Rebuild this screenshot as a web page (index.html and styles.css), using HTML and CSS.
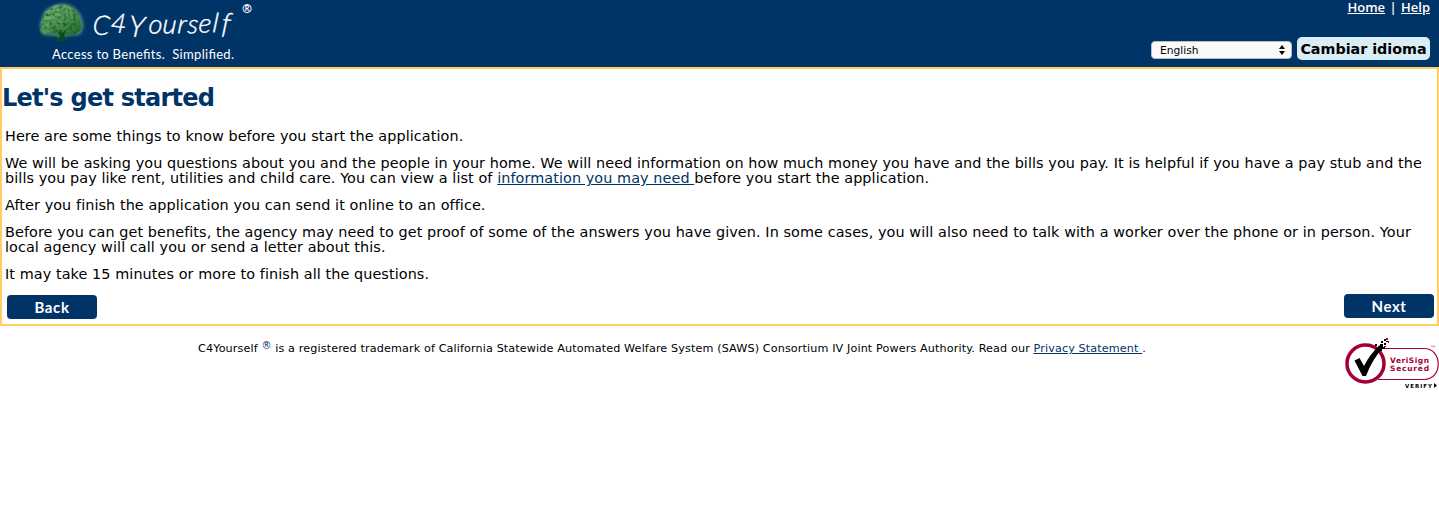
FILE: index.html
```html
<!DOCTYPE html>
<html lang="en">
<head>
<meta charset="utf-8">
<title>C4Yourself - Let's get started</title>
<link rel="stylesheet" href="styles.css">
</head>
<body>
<header class="header">
  <svg class="logo" width="240" height="67" viewBox="30 0 240 67" role="img" aria-label="C4Yourself">
    <defs>
      <filter id="glow" x="-20%" y="-20%" width="140%" height="140%"><feGaussianBlur stdDeviation="1.6"/></filter>
      <filter id="leaves" x="-5%" y="-5%" width="110%" height="110%" color-interpolation-filters="sRGB">
        <feTurbulence type="fractalNoise" baseFrequency=".3" numOctaves="2" seed="4"/>
        <feColorMatrix values="0 0 0 0 .07  0 0 0 0 .33  0 0 0 0 .1  2 0 0 0 -.8"/>
        <feComposite in2="SourceGraphic" operator="in" result="n"/>
        <feMerge><feMergeNode in="SourceGraphic"/><feMergeNode in="n"/></feMerge>
      </filter>
      <linearGradient id="crown" x1="0" y1="0" x2=".8" y2="1"><stop offset="0" stop-color="#82ba84"/><stop offset=".5" stop-color="#5a9d5e"/><stop offset="1" stop-color="#286d31"/></linearGradient>
    </defs>
    <path class="halo" filter="url(#glow)" d="M42 17Q44 10 50 7Q60 1 70 5Q79 9 82 18Q86 30 79 35L66 36L62 40L57 36L44 35Q37 30 42 17Z"/>
    <path class="trunk shade" d="M51 40Q61 37 72 40L61 41.500Z"/>
    <path fill="url(#crown)" filter="url(#leaves)" d="M44 18Q43 11 50 10Q53 4 60 5Q68 3 72 9Q79 10 79 18Q83 24 81 29Q77 36 70 34L64 36L60 34L55 36L51 33L44 34Q37 32 43 26Q39 22 44 18Z"/>
    <path class="trunk" d="M56 30L60 33L60 29L62 33L67 29L64 35L66 40L58 40L60 36Z"/>
    <text class="brand" x="92" y="34" rotate="5">C<tspan x="110" y="32">4</tspan><tspan class="tall" x="128" y="36">Y</tspan><tspan x="148 162 177 187 198 212" y="33 33 33 33 32 32">oursel</tspan><tspan class="tall" x="221" y="33">f</tspan></text>
    <text class="reg" x="242" y="12.500">®</text>
    <text class="tagline" x="52" y="59" textLength="182" xml:space="preserve">Access to Benefits.  Simplified.</text>
  </svg>
  <div class="tools">
    <nav class="links"><a href="#">Home</a> | <a href="#">Help</a></nav>
    <div class="language">
      <span class="select"><span>English</span><svg width="6" height="10" viewBox="0 0 6 10"><path d="M0 4L3 0L6 4ZM0 6L3 10L6 6Z"/></svg></span>
      <button class="change"><span>Cambiar idioma</span></button>
    </div>
  </div>
</header>
<main class="panel">
  <h1>Let's get started</h1>
  <p>Here are some things to know before you start the application.</p>
  <p>We will be asking you questions about you and the people in your home. We will need information on how much money you have and the bills you pay. It is helpful if you have a pay stub and the<br>bills you pay like rent, utilities and child care. You can view a list of <a href="#">information you may need </a>before you start the application.</p>
  <p>After you finish the application you can send it online to an office.</p>
  <p>Before you can get benefits, the agency may need to get proof of some of the answers you have given. In some cases, you will also need to talk with a worker over the phone or in person. Your<br>local agency will call you or send a letter about this.</p>
  <p>It may take 15 minutes or more to finish all the questions.</p>
  <div class="actions"><button class="back">Back</button><button class="next">Next</button></div>
</main>
<footer class="footer">
  <p class="legal">C4Yourself <sup>®</sup> is a registered trademark of California Statewide Automated Welfare System (SAWS) Consortium IV Joint Powers Authority. Read our <a href="#">Privacy Statement </a>.</p>
  <svg class="seal" width="96" height="56" viewBox="1343 335 96 56" role="img" aria-label="VeriSign Secured">
    <path class="ring thin" d="M1378 348.5H1424C1443 348.5 1443 379.5 1424 379.5H1378"/>
    <circle class="ring" cx="1365.5" cy="363.500" r="18.500"/>
    <path d="M1354.500 360.500L1359.500 358L1364 366Q1370 354 1380 345L1383 348Q1373 358 1366 376H1362.500Z"/>
    <path d="M1376 348h2v-2h2v-2h3v3h2v2h-3v2h-5zM1381 341h2v2h-2zM1384 343h2v2h-2zM1384 339h2v2h-2zM1386 341h2v1h-2zM1375 344h2v2h-2z"/>
    <path class="red" d="M1386 338h2v2h-2zM1388 341h1v2h-1zM1384 346h2v1h-2z"/>
    <text class="mark" x="1390" y="362.500" textLength="39">VeriSign</text>
    <text class="mark" x="1390" y="370.500" textLength="39">Secured</text>
    <text class="tm" x="1430" y="350">™</text>
    <text class="verify" x="1405" y="387.500" textLength="27">VERIFY</text>
    <path d="M1434 383L1437 385.500L1434 388Z"/>
  </svg>
</footer>
</body>
</html>
```
FILE: styles.css
```css
* { box-sizing: border-box; }
body { margin: 0; background: #fff; color: #000; font: 14.4px/15px Verdana, "DejaVu Sans", sans-serif; }
.header { display: flex; justify-content: space-between; height: 67px; padding: 0 9px 0 30px; background: #036; }
.logo { display: block; }
.halo { fill: #7cae91; opacity: .65; }
.trunk { fill: #0b4a1d; }
.shade { opacity: .6; }
.brand { fill: #fff; font: italic 300 27px Lato, sans-serif; stroke: #fff; stroke-width: .4; }
.tall { font-size: 29px; }
.reg { fill: #fff; font: bold 12px "Open Sans", sans-serif; }
.tagline { fill: #fff; font: 13px Lato, sans-serif; }
.tools { display: flex; flex-direction: column; align-items: flex-end; justify-content: space-between; padding-bottom: 7px; }
.links { color: #fff; font: 600 13px/15px "Open Sans", sans-serif; word-spacing: 1px; white-space: nowrap; }
.links a { color: #fff; }
.language { display: flex; align-items: center; gap: 5px; }
.select { display: flex; align-items: center; justify-content: space-between; width: 141px; height: 18px; margin-top: 3px; padding: 0 6px 0 8px; border: 1px solid #b5bfca; border-radius: 4px; background: #fafafa; font-size: 10.700px; }
.change { width: 133px; height: 23px; padding: 0; border: 0; border-radius: 5px; background: #d9edf7; color: #000; font: bold 14.3px/24px "DejaVu Sans", sans-serif; white-space: nowrap; }
.panel { height: 259px; padding: 15px 3px 0; border: 2px solid #fc6; }
h1 { margin: 0 0 17px -3px; color: #036; font-size: 24px; line-height: 28px; letter-spacing: -.76px; }
.panel p { margin: 0 0 12px; white-space: nowrap; letter-spacing: .083px; }
a { color: #036; }
.actions { display: flex; justify-content: space-between; padding: 0 0 0 2px; }
.back, .next { width: 90px; height: 24px; padding: 0; border: 0; border-radius: 4px; background: #036; color: #fff; font: bold 15px/24px Lato, sans-serif; letter-spacing: .6px; }
.back { margin-top: 1px; }
.footer { display: flex; justify-content: space-between; padding: 9px 0 0 198px; }
.legal { margin: 6px 0 0; font-size: 11.2px; letter-spacing: .12px; white-space: nowrap; }
.legal sup { font-size: 10px; line-height: 0; vertical-align: 3px; color: #036; }
.ring { fill: #fff; stroke: #a50034; stroke-width: 3.5; }
.thin { stroke-width: 1.2; }
.red { fill: #a50034; }
.mark { fill: #a50034; font: bold 7.500px "DejaVu Sans", sans-serif; }
.tm { fill: #a50034; font: 6px "DejaVu Sans", sans-serif; }
.verify { font: bold 5.500px "DejaVu Sans", sans-serif; }
```
